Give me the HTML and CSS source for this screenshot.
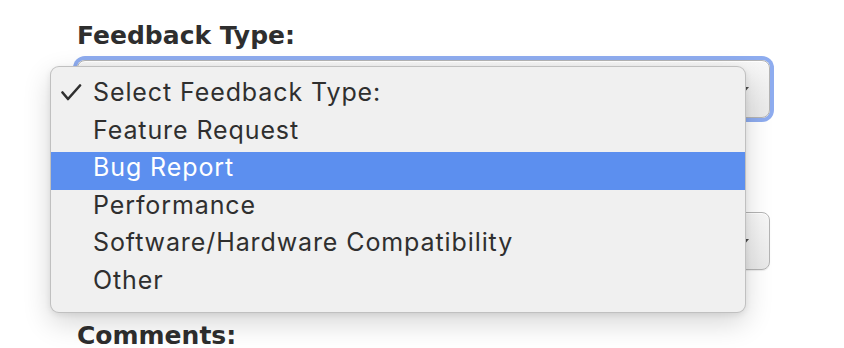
FILE: index.html
```html
<!DOCTYPE html>
<html lang="en">
<head>
  <meta charset="UTF-8" />
  <meta name="viewport" content="width=device-width, initial-scale=1.0" />
  <title>Feedback</title>
  <link rel="stylesheet" href="styles.css">
</head>
<body>

<form class="feedback-form">

  <div class="field field-open">
    <label class="field-label">Feedback Type:</label>
    <div class="select is-focused">
      <span class="select-value">Select Feedback Type:</span>
      <span class="select-arrow"></span>

      <!-- open dropdown list -->
      <ul class="menu">
        <li class="menu-item">
          <span class="check">
            <svg width="22" height="18" viewBox="0 0 22 18">
              <polyline points="1.5,8.5 7,15 19,1.5" fill="none" stroke="#2f2f2f" stroke-width="2.6" stroke-linecap="round" stroke-linejoin="round" />
            </svg>
          </span>
          Select Feedback Type:
        </li>
        <li class="menu-item"><span class="check"></span>Feature Request</li>
        <li class="menu-item active"><span class="check"></span>Bug Report</li>
        <li class="menu-item"><span class="check"></span>Performance</li>
        <li class="menu-item"><span class="check"></span>Software/Hardware Compatibility</li>
        <li class="menu-item"><span class="check"></span>Other</li>
      </ul>
    </div>
  </div>

  <div class="field">
    <label class="field-label">Product:</label>
    <div class="select">
      <span class="select-value">Select Product:</span>
      <span class="select-arrow"></span>
    </div>
  </div>

  <div class="field">
    <label class="field-label">Comments:</label>
  </div>

</form>

</body>
</html>
```

FILE: styles.css
```css
body {
  margin: 0;
  padding: 0;
  background: white;
  color: #2d2d2d;
  font-family: Inter, "Liberation Sans", sans-serif;
}
.feedback-form {
  padding: 21px 0 0 77px;
  width: 693px;
}
.field {
  margin-bottom: 51px;
}
.field-open {
  margin-bottom: 55px;
}
.field-label {
  display: block;
  font-family: "DejaVu Sans", Verdana, sans-serif;
  font-weight: bold;
  font-size: 25px;
  line-height: 29px;
  color: #2e2e2e;
  margin-bottom: 10px;
}
.select {
  position: relative;
  height: 58px;
  box-sizing: border-box;
  border: 1px solid #b4b4b4;
  border-radius: 8px;
  background: linear-gradient(#f7f7f7, #e9e9e9);
  box-shadow: inset 0 1px 0 white, 0 1px 1px rgba(0,0,0,0.08);
  display: flex;
  align-items: center;
  padding-left: 14px;
  font-size: 24px;
}
.select.is-focused {
  box-shadow: inset 0 1px 0 white, 0 0 0 4px #8eacef;
}
.select-arrow {
  position: absolute;
  right: 20px;
  top: 26px;
  width: 0;
  height: 0;
  border-left: 5px solid transparent;
  border-right: 5px solid transparent;
  border-top: 6px solid #4a4a4a;
}

/* dropdown list drawn over the form */
.menu {
  position: absolute;
  left: -28px;
  top: 5px;
  width: 696px;
  box-sizing: border-box;
  margin: 0;
  padding: 10px 0;
  list-style: none;
  background: #f0f0f0;
  border: 1px solid rgba(0,0,0,0.2);
  border-radius: 9px;
  box-shadow: 0 10px 28px rgba(0,0,0,0.16), 0 2px 6px rgba(0,0,0,0.08);
  z-index: 10;
}
.menu-item {
  display: flex;
  align-items: center;
  height: 37.5px;
  line-height: 31.5px;
  padding-bottom: 6px;
  box-sizing: border-box;
  font-size: 25px;
  letter-spacing: 0.9px;
  color: #2f2f2f;
}
.menu-item.active {
  background: #5c8fef;
  color: white;
}
.check {
  width: 42px;
  flex-shrink: 0;
  padding-left: 10px;
  box-sizing: border-box;
  display: flex;
  align-items: center;
}
```
